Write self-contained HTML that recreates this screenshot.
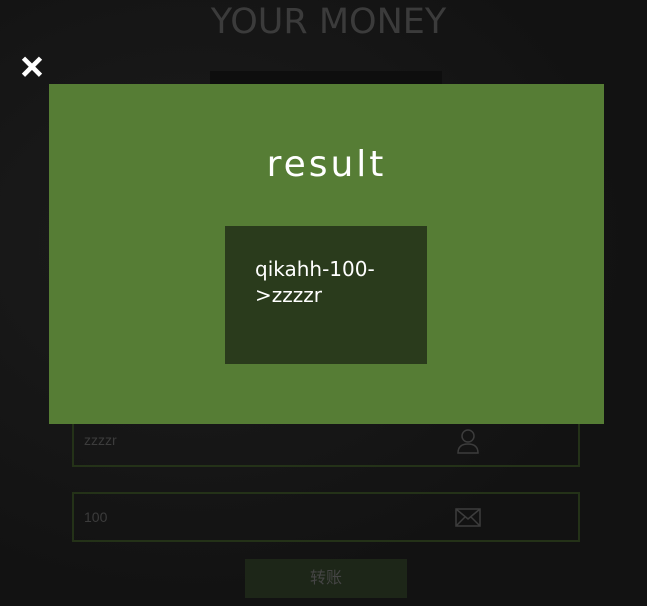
<!DOCTYPE html>
<html><head><meta charset="utf-8"><style>
body{margin:0;width:647px;height:606px;background:#141414;position:relative;overflow:hidden;font-family:"Liberation Sans","Noto Sans CJK SC",sans-serif}
.a{position:absolute}
</style></head><body>
<div class="a" style="left:0;top:0;width:647px;height:606px;background:radial-gradient(ellipse at 30% 40%,#1c1c1c,#121212 70%)"></div>
<div class="a" style="left:0;top:2px;width:647px;text-align:center;font-family:'DejaVu Sans',sans-serif;font-size:35px;color:#3b3b3b;padding-left:5px">YOUR MONEY</div>
<div class="a" style="left:210px;top:71px;width:232px;height:14px;background:#0e0e0e"></div>
<div class="a" style="left:19px;top:52px;color:#fff;font-size:31px;font-weight:bold;line-height:32px;font-family:'DejaVu Sans',sans-serif;-webkit-text-stroke:1.5px #fff">✕</div>
<div class="a" style="left:72px;top:410px;width:504px;height:53px;border:2px solid #243218"></div>
<div class="a" style="left:84px;top:432px;font-size:14px;color:#3c3c3c">zzzzr</div>
<svg class="a" style="left:455px;top:427px" width="26" height="28" viewBox="0 0 26 28"><circle cx="13" cy="9" r="6" fill="none" stroke="#3c3c3c" stroke-width="1.5"/><path d="M3 26 Q3 17 13 17 Q23 17 23 26 Z" fill="none" stroke="#3c3c3c" stroke-width="1.5"/></svg>
<div class="a" style="left:72px;top:492px;width:504px;height:46px;border:2px solid #243218"></div>
<div class="a" style="left:84px;top:509px;font-size:14px;color:#3c3c3c">100</div>
<svg class="a" style="left:455px;top:508px" width="26" height="20" viewBox="0 0 26 20"><rect x="1" y="1" width="24" height="17" fill="none" stroke="#3c3c3c" stroke-width="1.5"/><path d="M1 1 L13 11 L25 1 M1 18 L10 9 M25 18 L16 9" fill="none" stroke="#3c3c3c" stroke-width="1.5"/></svg>
<div class="a" style="left:245px;top:559px;width:162px;height:39px;background:#1d2618;color:#454545;font-size:16px;text-align:center;line-height:39px">转账</div>
<div class="a" style="left:49px;top:84px;width:555px;height:340px;background:#567d35"></div>
<div class="a" style="left:49px;top:144px;width:555px;text-align:center;color:#fff;font-size:36px;letter-spacing:3px;font-family:'DejaVu Sans',sans-serif">result</div>
<div class="a" style="left:225px;top:226px;width:202px;height:138px;background:#2a3b1c"></div>
<div class="a" style="left:255px;top:256px;width:160px;color:#fff;font-size:20px;line-height:26px;font-family:'DejaVu Sans',sans-serif">qikahh-100-<br>&gt;zzzzr</div>
</body></html>
